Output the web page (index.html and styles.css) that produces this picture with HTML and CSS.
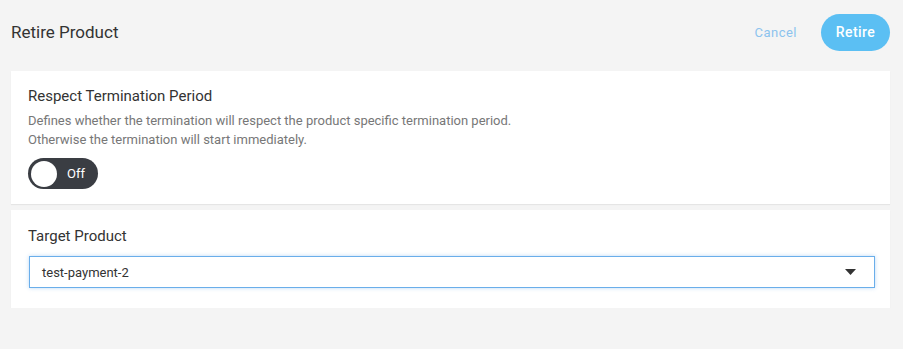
FILE: index.html
```html
<!DOCTYPE html>
<html lang="en">
<head>
  <meta charset="UTF-8" />
  <title>Retire Product</title>
  <link rel="stylesheet" href="styles.css">
</head>
<body>
  <div class="page">
    <div class="header">
      <h1>Retire Product</h1>
      <div class="actions">
        <button class="cancel-button">Cancel</button>
        <button class="retire-button">Retire</button>
      </div>
    </div>

    <div class="card">
      <div class="card-title">Respect Termination Period</div>
      <p class="description">
        Defines whether the termination will respect the product specific termination period.<br>
        Otherwise the termination will start immediately.
      </p>
      <div class="toggle">
        <span class="toggle-knob"></span>
        <span class="toggle-label">Off</span>
      </div>
    </div>

    <div class="card card-target">
      <div class="card-title">Target Product</div>
      <div class="select">
        <span class="select-value">test-payment-2</span>
        <!-- Caret -->
        <svg class="select-arrow" width="11" height="6" viewBox="0 0 11 6">
          <path d="M0 0H11L5.5 6Z" fill="#333"/>
        </svg>
      </div>
    </div>
  </div>
</body>
</html>
```

FILE: styles.css
```css
* {
    margin: 0;
    padding: 0;
    box-sizing: border-box;
    font-family: 'Roboto', sans-serif;
}

body {
    background-color: #f4f4f4;
    color: #333;
}

.page {
    padding: 0 13px 0 11px;
}

.header {
    display: flex;
    justify-content: space-between;
    align-items: center;
    height: 63px;
    padding-top: 1px;
}

.header h1 {
    font-size: 17px;
    font-weight: 400;
    color: #333;
}

.actions {
    display: flex;
    align-items: center;
    gap: 24px;
}

.cancel-button {
    background: none;
    border: none;
    color: #8cc3ee;
    font-size: 13px;
    letter-spacing: 0.5px;
    cursor: pointer;
}

.retire-button {
    background-color: #5bbff3;
    color: white;
    border: none;
    border-radius: 19px;
    width: 69px;
    height: 37px;
    font-size: 14px;
    font-weight: 500;
    letter-spacing: 0.4px;
    cursor: pointer;
}

.card {
    background-color: white;
    margin-top: 8px;
    padding: 16px 15px 15px 17px;
    box-shadow: 0 1px 1px rgba(0, 0, 0, 0.06);
}

.card-title {
    font-size: 15px;
    color: #333;
    line-height: 18px;
}

.description {
    margin-top: 6px;
    font-size: 13px;
    line-height: 19px;
    color: #777;
}

.toggle {
    display: flex;
    align-items: center;
    width: 70px;
    height: 31px;
    margin-top: 9px;
    padding-left: 3px;
    border-radius: 16px;
    background-color: #3a3d43;
}

.toggle-knob {
    width: 26px;
    height: 26px;
    border-radius: 50%;
    background-color: white;
}

.toggle-label {
    margin-left: 10px;
    font-size: 13px;
    color: white;
}

.card-target {
    margin-top: 6px;
    padding-top: 17px;
    padding-bottom: 20px;
}

.select {
    display: flex;
    justify-content: space-between;
    align-items: center;
    height: 32px;
    margin-top: 11px;
    margin-left: 1px;
    padding: 0 18px 0 12px;
    border: 1px solid #6aaeea;
    box-shadow: 0 0 4px rgba(106, 174, 234, 0.45);
    background-color: white;
}

.select-value {
    font-size: 13px;
    color: #333;
}
```
